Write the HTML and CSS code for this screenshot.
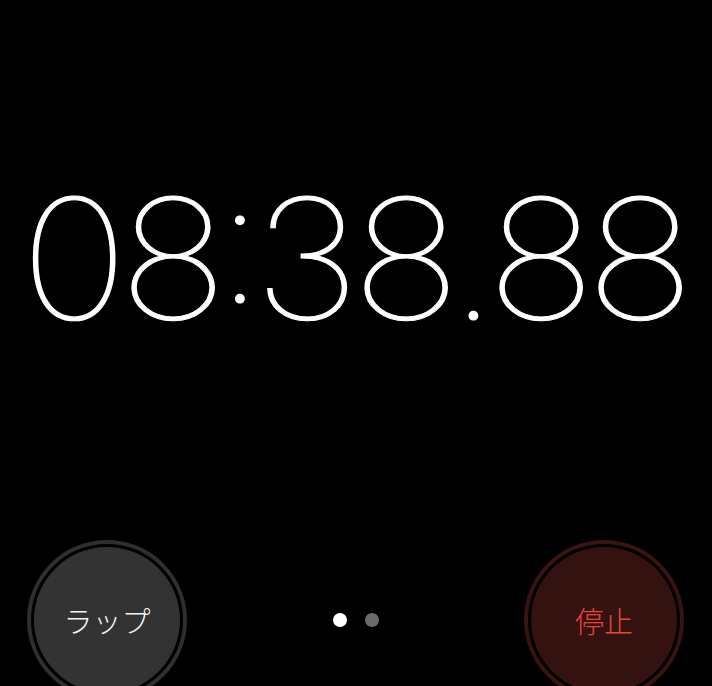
FILE: index.html
```html
<!DOCTYPE html>
<html lang="ja">
<head>
<meta charset="utf-8">
<link rel="stylesheet" href="styles.css">
</head>
<body>
<main class="screen">
  <div class="timer">
    <span class="d">0</span><span class="d">8</span><span class="p colon">:</span><span class="d">3</span><span class="d">8</span><span class="p">.</span><span class="d">8</span><span class="d">8</span>
  </div>
  <div class="controls">
    <div class="btn btn-lap"><div class="face">ラップ</div></div>
    <div class="pager"><span class="dot on"></span><span class="dot"></span></div>
    <div class="btn btn-stop"><div class="face">停止</div></div>
  </div>
</main>
</body>
</html>
```
FILE: styles.css
```css
html, body {
  margin: 0;
  padding: 0;
  background: #000;
  height: 100%;
  overflow: hidden;
}
.screen {
  display: flex;
  flex-direction: column;
  width: 712px;
}
.timer {
  display: flex;
  justify-content: center;
  margin-top: 168px;
  padding-right: 8px;
  height: 180px;
  font-family: Inter, Roboto, "Liberation Sans", sans-serif;
  font-weight: 100;
  font-size: 167px;
  line-height: 180px;
  color: #fff;
  -webkit-text-stroke: 1.2px #fff;
  font-variant-numeric: tabular-nums;
}
.timer .d {
  display: block;
  width: 99px;
  text-align: center;
  transform: scaleX(1.09);
}
.timer .p {
  display: block;
  width: 35.5px;
  text-align: center;
}
.timer .colon {
  font-feature-settings: "case" 1;
}
.controls {
  display: flex;
  justify-content: space-between;
  align-items: center;
  padding: 0 28px 0 27px;
  margin-top: 192px;
}
.btn {
  width: 160px;
  height: 160px;
  box-sizing: border-box;
  border-radius: 50%;
  border: 4px solid #2f2f2f;
  padding: 3px;
}
.face {
  width: 100%;
  height: 100%;
  border-radius: 50%;
  display: flex;
  align-items: center;
  justify-content: center;
  font-family: "Noto Sans CJK JP", sans-serif;
  font-weight: 300;
  font-size: 29px;
}
.btn-lap .face {
  background: #333;
  color: #f2f2f2;
}
.btn-stop {
  border-color: #381310;
}
.btn-stop .face {
  background: #331210;
  color: #e8443a;
}
.pager {
  display: flex;
  gap: 18px;
  align-items: center;
}
.dot {
  width: 14px;
  height: 14px;
  border-radius: 50%;
  background: #6b6b6b;
}
.dot.on {
  background: #fff;
}
```
